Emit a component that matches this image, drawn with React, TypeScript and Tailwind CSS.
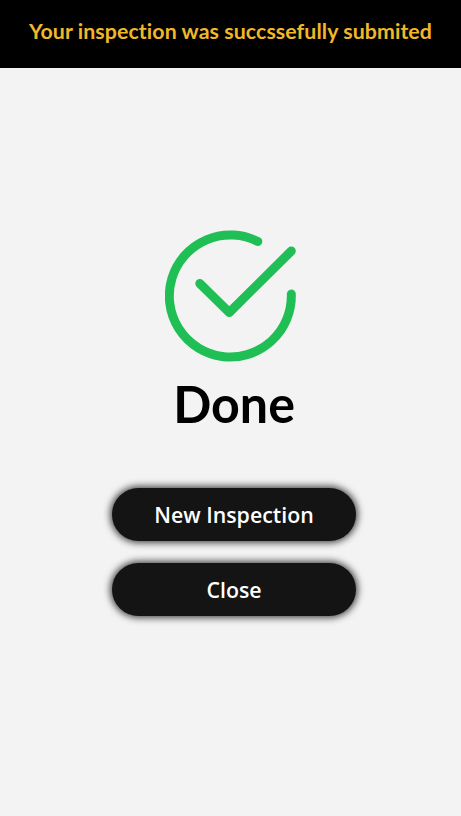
const buttonClass =
  "flex w-[244px] items-center justify-center rounded-full bg-[#141414] font-['Open_Sans',sans-serif] text-[21.33px] leading-8 font-semibold text-white shadow-[0_0_7px_2px_rgba(0,0,0,0.7)]";

export default function App() {
  return (
    <main className="flex h-[816px] w-[461px] flex-col overflow-hidden bg-[#f3f3f3] font-[Lato,sans-serif]">
      <header className="flex h-[68px] justify-center bg-black pt-[15px]">
        <h1 className="text-[21.33px] leading-8 font-bold tracking-[0.08px] whitespace-nowrap text-[#f0b828]">
          Your inspection was succssefully submited
        </h1>
      </header>
      <section className="flex flex-col items-center pt-[162px]">
        <svg
          className="h-[132px] w-[132px]"
          viewBox="0.7 0 132 132"
          fill="none"
          stroke="#20bf55"
          strokeWidth="9"
          strokeLinecap="round"
          strokeLinejoin="round"
        >
          <path d="M93.5 11.5A61 61 0 1 0 127 64" />
          <path d="M35.5 53.5 65 82.5 127 21" />
        </svg>
        <h2 className="mt-[6px] ml-[7px] scale-x-[0.965] text-[52px] leading-[70px] font-bold text-black">
          Done
        </h2>
      </section>
      <div className="mt-[49.5px] ml-[112px] flex flex-col gap-[22px]">
        <button className={`${buttonClass} h-[53.5px] pt-[2px]`}>New Inspection</button>
        <button className={`${buttonClass} h-[53px] pt-px`}>Close</button>
      </div>
    </main>
  );
}
